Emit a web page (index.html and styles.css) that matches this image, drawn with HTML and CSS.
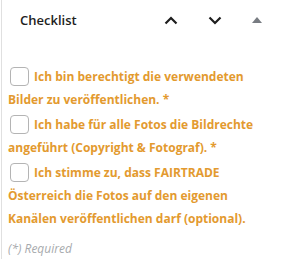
FILE: index.html
```html
<!DOCTYPE html>
<html lang="de">
<head>
  <meta charset="UTF-8" />
  <title>Checklist</title>
  <link rel="stylesheet" href="styles.css">
</head>
<body>

<div class="panel">
  <div class="panel-header">
    <h2>Checklist</h2>
    <div class="panel-actions">
      <button class="btn-icon" aria-label="Nach oben">
        <svg width="14" height="9" viewBox="0 0 14 9"><path d="M1.5 7.5 L7 2 L12.5 7.5" fill="none" stroke="#1e1e1e" stroke-width="2.2"/></svg>
      </button>
      <button class="btn-icon" aria-label="Nach unten">
        <svg width="14" height="9" viewBox="0 0 14 9"><path d="M1.5 1.5 L7 7 L12.5 1.5" fill="none" stroke="#1e1e1e" stroke-width="2.2"/></svg>
      </button>
      <button class="btn-icon btn-toggle" aria-label="Einklappen">
        <svg width="10" height="6" viewBox="0 0 10 6"><path d="M0 6 L5 0 L10 6 Z" fill="#787c82"/></svg>
      </button>
    </div>
  </div>

  <div class="panel-body">
    <label class="check-item">
      <input type="checkbox"> Ich bin berechtigt die verwendeten Bilder zu veröffentlichen. *
    </label>
    <label class="check-item">
      <input type="checkbox"> Ich habe für alle Fotos die Bildrechte angeführt (Copyright &amp; Fotograf). *
    </label>
    <label class="check-item">
      <input type="checkbox"> Ich stimme zu, dass FAIRTRADE Österreich die Fotos auf den eigenen Kanälen veröffentlichen darf (optional).
    </label>
    <p class="required-note">(*) Required</p>
  </div>
</div>

</body>
</html>
```

FILE: styles.css
```css
* { box-sizing: border-box; margin: 0; padding: 0; }
body {
  font-family: "Open Sans", "Noto Sans", sans-serif;
  background: #fff;
  color: #1e1e1e;
}

.panel {
  margin-left: 1px;
  min-height: 259px;
  border-left: 1px solid #e0e0e0;
}

.panel-header {
  display: flex;
  align-items: center;
  justify-content: space-between;
  height: 40px;
  padding: 0 14px 0 18px;
}

.panel-header h2 {
  font-size: 13px;
  font-weight: 600;
}

.panel-actions {
  display: flex;
  align-items: center;
  gap: 20px;
}

.btn-icon {
  width: 24px;
  height: 24px;
  display: flex;
  align-items: center;
  justify-content: center;
  background: none;
  border: none;
}

.btn-toggle {
  width: 20px;
}

.panel-body {
  padding: 25px 16px 0 6px;
}

.check-item {
  display: block;
  font-size: 12px;
  font-weight: 700;
  line-height: 23px;
  color: #e39a2f;
  margin-bottom: 2px;
}

.check-item input {
  appearance: none;
  width: 19px;
  height: 19px;
  margin: 0 2px 0 2px;
  vertical-align: -5px;
  border: 1px solid #b4b4b4;
  border-radius: 4px;
  background: #fff;
}

.required-note {
  margin-top: 10px;
  font-size: 12px;
  font-style: italic;
  color: #a7aaad;
}
```
